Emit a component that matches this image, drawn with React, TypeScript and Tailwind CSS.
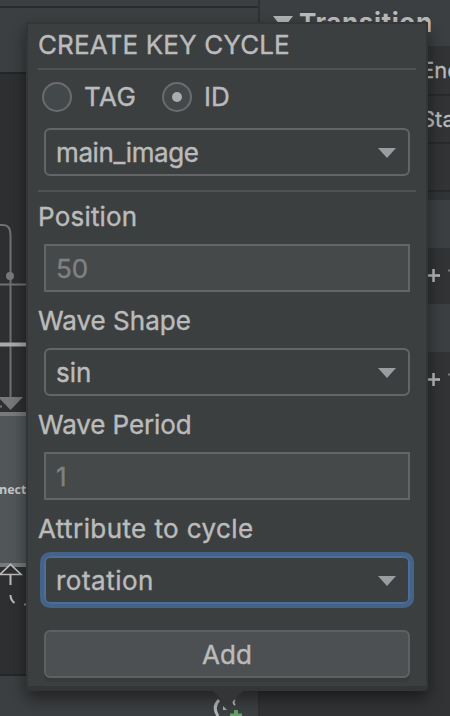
import type { ReactNode } from "react";

function Backdrop() {
  return (
    <div className="flex h-full w-full">
      <div className="flex w-[258px] shrink-0 flex-col">
        <div className="h-[6px] bg-[#3c3f41]" />
        <div className="h-[66px] border-t-2 border-[#2a2b2c] bg-[#3c3f41]" />
        <div className="h-[602px] border-t-2 border-[#252627] bg-[#2e2f31]">
          <svg width="258" height="600" viewBox="0 74 258 600" fill="none">
            <path d="M0 225H3Q10.5 225 10.5 235V399" stroke="#707173" strokeWidth="2" />
            <circle cx="10" cy="276" r="4" fill="#77787a" />
            <path d="M0 284.500H28" stroke="#707173" strokeWidth="2" />
            <path d="M0 344.500H28" stroke="#aaa" strokeWidth="4" />
            <path d="M-2 397H23L10.500 410Z" fill="#77787a" />
            <path d="M0 406.500H2" stroke="#77787a" strokeWidth="2" />
            <rect x="-10" y="412" width="60" height="155" fill="#515658" />
            <path d="M0 414H40M0 565H40" stroke="#77797a" strokeWidth="4" />
            <path d="M0 574.500L10.500 564.500L21 574.500Z" fill="#2e2f31" stroke="#bbb" strokeWidth="1.700" />
            <path d="M10.500 575V585M10.500 595Q10.500 600 14.500 603" stroke="#bbb" strokeWidth="2" />
            <path d="M24 604.500H27" stroke="#888" strokeWidth="2" />
            <text x="-1" y="494" fill="#c5c6c7" fontSize="12.500" fontWeight="700" fontFamily="Open Sans, sans-serif">nect</text>
          </svg>
        </div>
        <div className="flex h-[42px] justify-end border-t-2 border-[#252627] bg-[#3c3f41] pr-[14px]">
          <svg width="32" height="40" viewBox="212 676 32 40" fill="none">
            <path d="M219 700Q212 707 218 716" stroke="#b5b5b5" strokeWidth="3" />
            <path d="M235 700Q232 702 235 705" stroke="#b5b5b5" strokeWidth="2" />
            <path d="M223 706V710H227Z" fill="#aaa" />
            <path d="M236 710V716M230 715.500H242" stroke="#64a067" strokeWidth="4" />
          </svg>
        </div>
      </div>
      <div className="flex min-w-0 flex-1 flex-col overflow-hidden border-l-2 border-[#303132] bg-[#313335] text-[22px] whitespace-nowrap text-[#bbb]">
        <div className="flex h-[46px] shrink-0 items-center gap-[6px] bg-[#3c3f41] pb-[2px] pl-[13px] font-['Inter',sans-serif] text-[26px] font-bold">
          <svg width="20" height="14" viewBox="0 0 20 14" className="mt-[2px]"><path d="M0 0H20L10 13Z" fill="#b0b1b2" /></svg>
          <span className="tracking-[0.600px]">Transition</span>
        </div>
        <div className="flex h-[50px] shrink-0 items-center border-b-2 border-[#292a2b] pl-[161px] font-['Inter',sans-serif] [-webkit-text-stroke:0.3px]">End</div>
        <div className="flex h-[48px] shrink-0 items-center border-b-2 border-[#292a2b] pl-[161px] font-['Inter',sans-serif] [-webkit-text-stroke:0.3px]">Start</div>
        <div className="h-[48px] shrink-0 border-b-2 border-[#292a2b]" />
        <div className="mt-[8px] h-[48px] shrink-0 bg-[#3c3f41]" />
        <TransformRow />
        <div className="h-[48px] shrink-0 bg-[#3c3f41]" />
        <TransformRow />
      </div>
    </div>
  );
}

function TransformRow() {
  return (
    <div className="h-[56px] shrink-0 pt-[20px] pl-[168px]">
      <svg width="30" height="16" viewBox="428 268 30 16" fill="none">
        <path d="M428 275.500H440M433.500 269V282" stroke="#b8b9ba" strokeWidth="2.500" />
        <path d="M448 270.500H458" stroke="#77797a" strokeWidth="2" />
      </svg>
    </div>
  );
}

function Label({ children, className = "" }: { children: ReactNode; className?: string }) {
  return <div className={`flex shrink-0 items-center ${className}`}>{children}</div>;
}

function Combo({ value, focused = false, className = "" }: { value: string; focused?: boolean; className?: string }) {
  return (
    <div
      className={`mx-[6px] flex h-[48px] shrink-0 items-center justify-between rounded-[6px] border-2 pr-[12px] pl-[10px] ${
        focused ? "border-[#4b6e9b] shadow-[0_0_0_4px_#456389]" : "border-[#646566]"
      }`}
    >
      <span className={`pt-[2px] ${className}`}>{value}</span>
      <svg width="18" height="10" viewBox="0 0 18 10" className="mt-[2px]"><path d="M0 0H18L9 10Z" fill="#9a9da0" /></svg>
    </div>
  );
}

function Field({ value }: { value: string }) {
  return (
    <div className="mx-[6px] flex h-[48px] shrink-0 items-center border-2 border-[#646566] bg-[#45494a] pl-[10px] text-[#808182]">
      <span className="pt-[2px]">{value}</span>
    </div>
  );
}

function Radio({ checked = false }: { checked?: boolean }) {
  return (
    <span className="flex size-[30px] items-center justify-center rounded-full border-2 border-[#6b6c6d] bg-[#43494a]">
      {checked && <span className="size-[10px] rounded-full bg-[#acacac]" />}
    </span>
  );
}

export default function App() {
  return (
    <div className="relative h-[716px] w-[450px] overflow-hidden bg-[#313335]">
      <Backdrop />
      <div className="absolute top-[22px] left-[26px] h-[669px] w-[402px] rounded-b-[4px] border-2 border-b-[5px] border-[#343536] bg-[#3c3f40] px-[10px] font-['Inter',sans-serif] text-[26px] leading-none whitespace-nowrap text-[#bbb] shadow-[0_8px_16px_rgba(0,0,0,0.45)] [-webkit-text-stroke:0.4px]">
        <div className="flex h-[46px] items-center border-b-2 border-[#515253] pb-[2px]">
          <span className="tracking-[0.120px]">CREATE KEY CYCLE</span>
        </div>
        <div className="flex h-[54px] items-center pl-[4px]">
          <Radio />
          <span className="ml-[12px] w-[78px] tracking-[0.500px]">TAG</span>
          <Radio checked />
          <span className="ml-[12px]">ID</span>
        </div>
        <div className="h-[68px] border-b-2 border-[#515253] pt-[4px]">
          <Combo value="main_image" className="tracking-[-0.400px]" />
        </div>
        <Label className="h-[52px] pb-[2px] tracking-[0.200px]">Position</Label>
        <Field value="50" />
        <Label className="h-[56px] pt-[2px]">Wave Shape</Label>
        <Combo value="sin" />
        <Label className="h-[56px] pt-[2px] tracking-[-0.100px]">Wave Period</Label>
        <Field value="1" />
        <Label className="h-[56px] pt-[2px] tracking-[0.410px]">Attribute to cycle</Label>
        <Combo value="rotation" focused className="tracking-[0.500px]" />
        <button className="mx-[6px] mt-[26px] flex h-[48px] w-[366px] items-center justify-center rounded-[6px] border-2 border-[#5e6061] bg-[#4c5052] pt-[2px] shadow-[0_4px_0_#38393a]">
          Add
        </button>
        <svg className="absolute top-[667px] left-[185px]" width="30" height="15" viewBox="0 0 30 15">
          <path d="M0 0H30L15 15Z" fill="#343536" />
        </svg>
      </div>
    </div>
  );
}
